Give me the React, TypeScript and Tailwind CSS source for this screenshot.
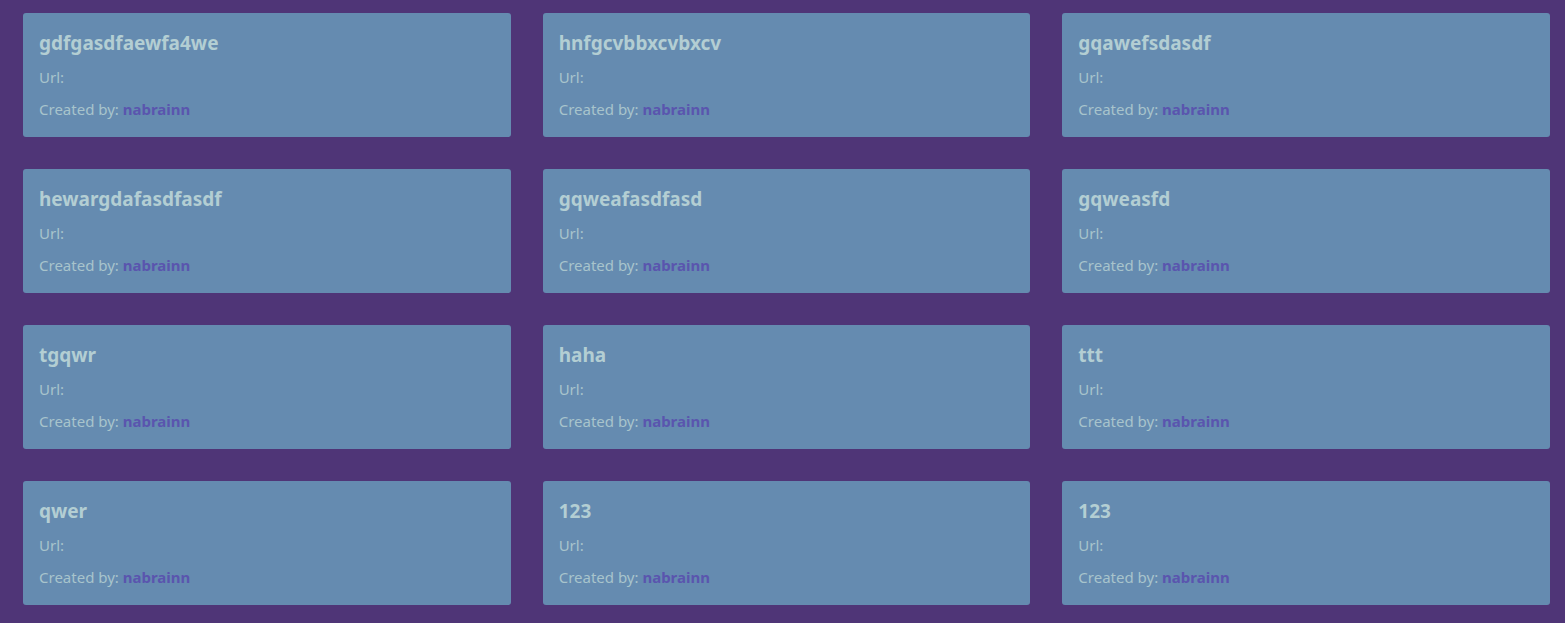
const links = [
  "gdfgasdfaewfa4we",
  "hnfgcvbbxcvbxcv",
  "gqawefsdasdf",
  "hewargdafasdfasdf",
  "gqweafasdfasd",
  "gqweasfd",
  "tgqwr",
  "haha",
  "ttt",
  "qwer",
  "123",
  "123",
];

export default function App() {
  return (
    <div
      className="min-h-[623px] bg-[#4f3577] pl-[23px] pr-[15px] pt-[13px] pb-[18px]"
      style={{ fontFamily: '"Noto Sans", "Open Sans", sans-serif' }}
    >
      <div className="grid grid-cols-3 gap-x-8 gap-y-8">
        {links.map((title, i) => (
          <div key={i} className="h-[124px] rounded-[3px] bg-[#658bb0] px-4 pt-[18px]">
            <h3 className="text-[19px] font-bold leading-[24px] text-[#b3ced3]">{title}</h3>
            <p className="mt-[12px] text-[15px] leading-[20px] text-[#a8c4cc]">Url:</p>
            <p className="mt-[12px] text-[15px] leading-[20px] text-[#a8c4cc]">
              Created by: <span className="font-bold text-[#5a55ae]">nabrainn</span>
            </p>
          </div>
        ))}
      </div>
    </div>
  );
}
